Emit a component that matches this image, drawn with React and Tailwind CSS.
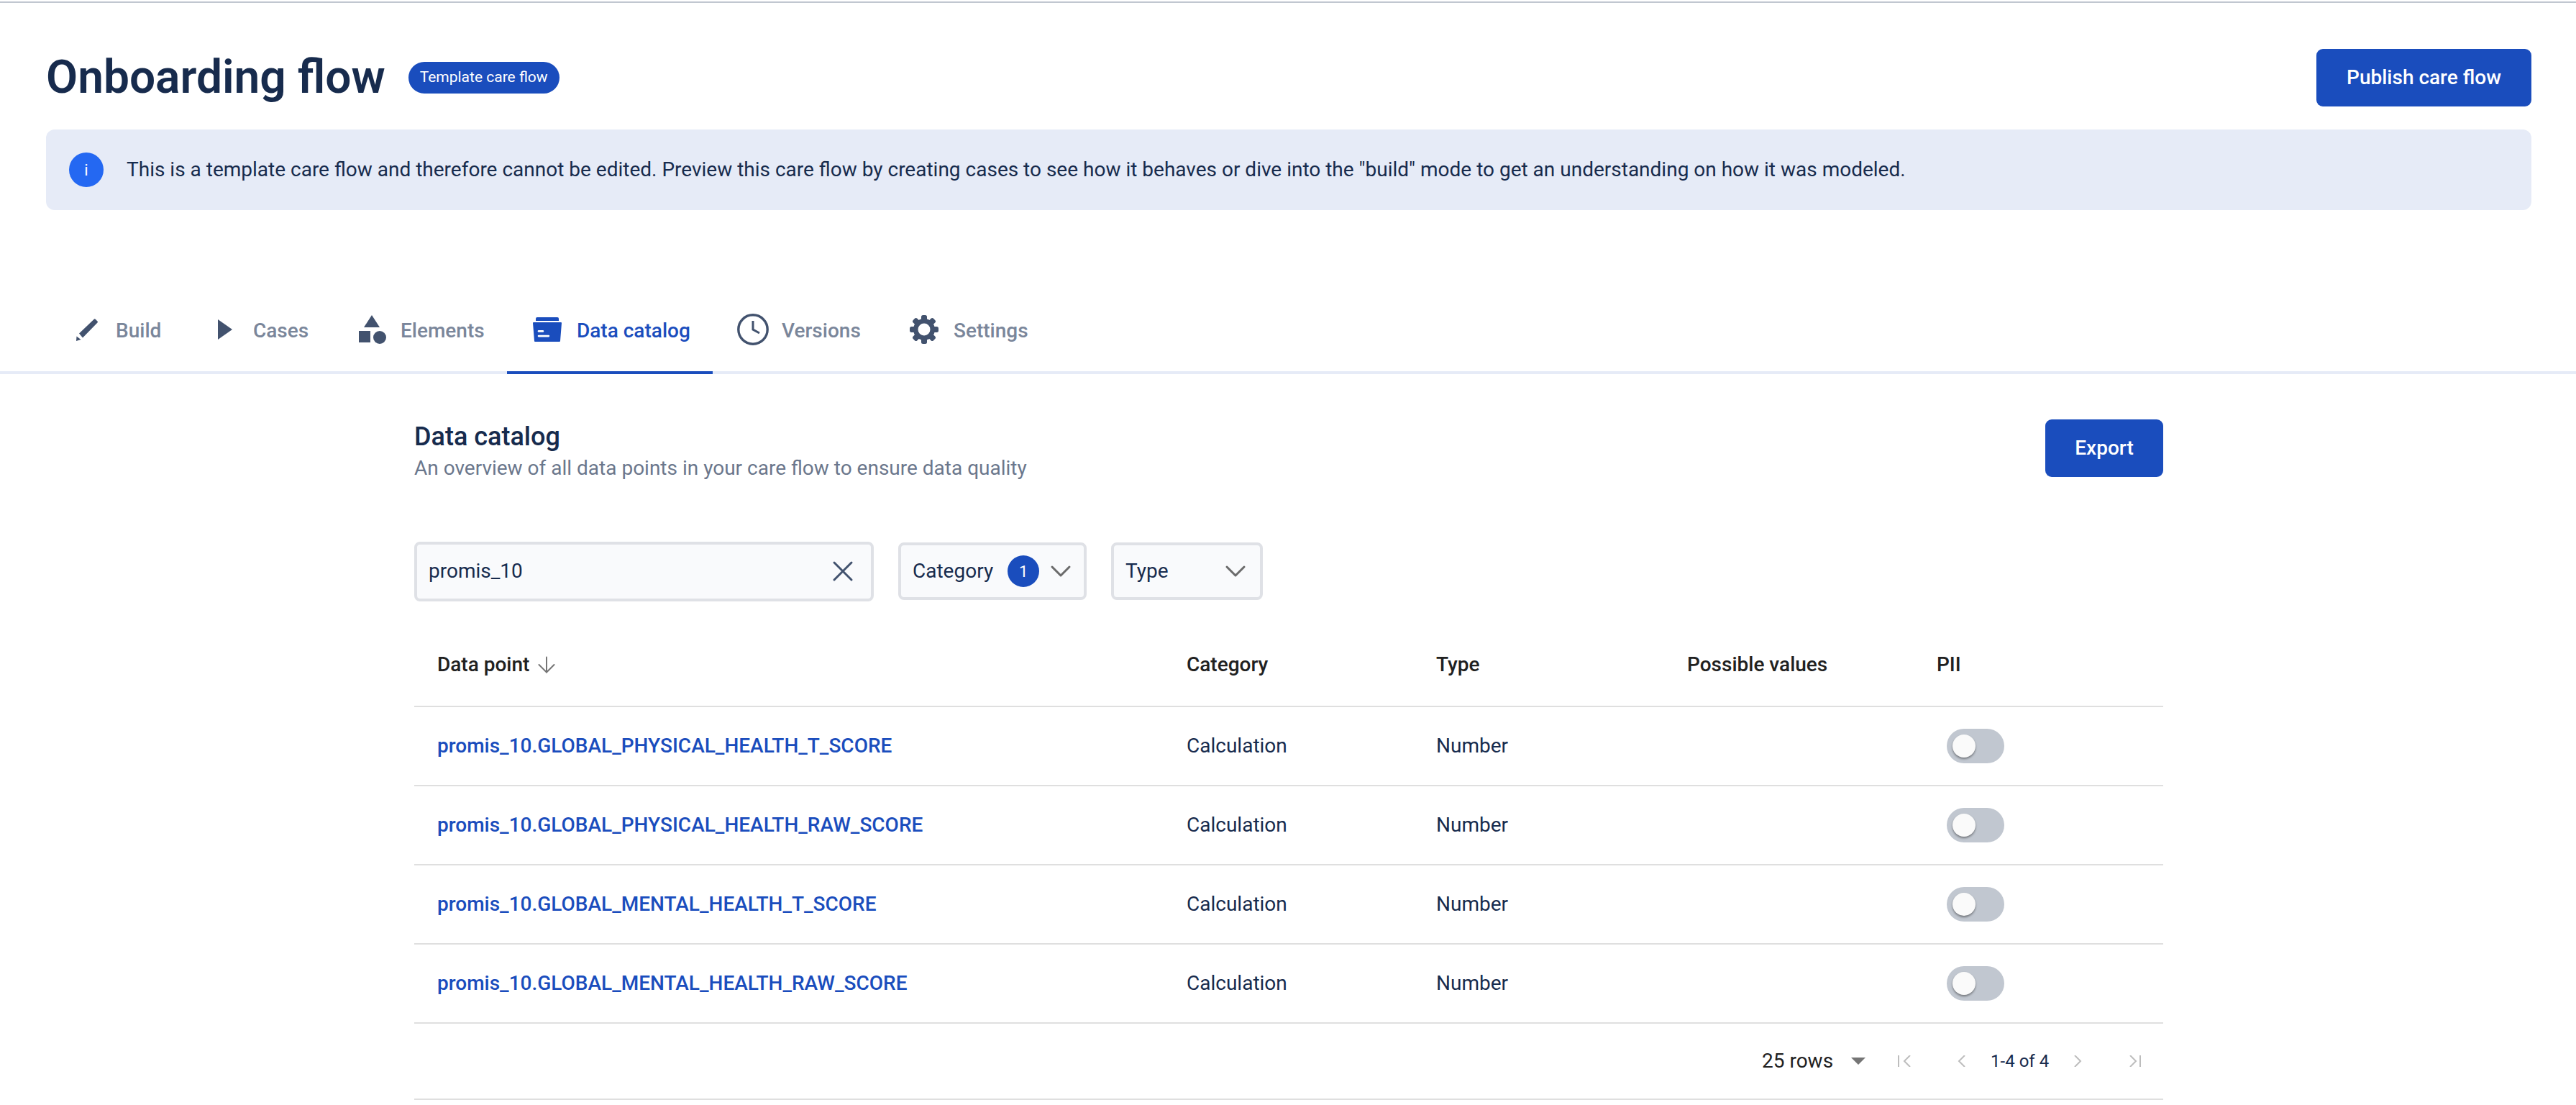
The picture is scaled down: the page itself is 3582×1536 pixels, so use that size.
import { ChevronDown, X, ArrowDown } from "lucide-react";

const rows = [
  "promis_10.GLOBAL_PHYSICAL_HEALTH_T_SCORE",
  "promis_10.GLOBAL_PHYSICAL_HEALTH_RAW_SCORE",
  "promis_10.GLOBAL_MENTAL_HEALTH_T_SCORE",
  "promis_10.GLOBAL_MENTAL_HEALTH_RAW_SCORE",
];

const gridCols = "grid grid-cols-[1042px_347px_349px_347px_347px] items-center";

function PencilIcon() {
  return (
    <svg viewBox="0 0 30 31" className="w-[30px] h-[31px] fill-[#42526e]">
      <path d="M25 0.500Q26 0 27 1L29.500 3.500Q30.300 4.500 29.500 5.500L9 26.500L4 20.500ZM0.500 24.500L6.500 29L0 31Z" />
    </svg>
  );
}

function PlayIcon() {
  return (
    <svg viewBox="0 0 20 28" className="w-5 h-7 fill-[#42526e]">
      <path d="M0 0L20 14L0 28Z" />
    </svg>
  );
}

function ShapesIcon() {
  return (
    <svg viewBox="0 0 38 40" className="w-[38px] h-10 fill-[#42526e]">
      <path d="M18 0L29 17H7ZM0 22H16V38H0Z" />
      <circle cx="29" cy="31" r="9" />
    </svg>
  );
}

function CatalogIcon() {
  return (
    <svg viewBox="0 0 40 34" className="w-10 h-[34px] fill-[#1a4dbd]">
      <path d="M6 0H34Q36 0 36 2V5H4V2Q4 0 6 0Z" />
      <path d="M1 7H39Q40 7 40 8L38 33Q38 34 37 34H3Q2 34 2 33L0 8Q0 7 1 7Z" />
      <rect x="6.700" y="18" width="8.500" height="2.700" rx="1.300" fill="#fff" />
      <rect x="6.700" y="24.700" width="16.500" height="2.700" rx="1.300" fill="#fff" />
    </svg>
  );
}

function ClockIcon() {
  return (
    <svg viewBox="0 0 44 44" className="w-11 h-11 fill-none stroke-[#42526e]">
      <circle cx="22" cy="22" r="20.200" strokeWidth="3.400" />
      <path d="M22 10V22L31 27" strokeWidth="3" />
    </svg>
  );
}

function GearIcon() {
  return (
    <svg viewBox="0 0 40 40" className="w-10 h-10 fill-[#42526e]">
      <rect x="16" y="0" width="8" height="40" rx="2.500" />
      <rect x="16" y="0" width="8" height="40" rx="2.500" transform="rotate(45 20 20)" />
      <rect x="16" y="0" width="8" height="40" rx="2.500" transform="rotate(90 20 20)" />
      <rect x="16" y="0" width="8" height="40" rx="2.500" transform="rotate(135 20 20)" />
      <circle cx="20" cy="20" r="15" />
      <circle cx="20" cy="20" r="8.500" fill="#fff" />
    </svg>
  );
}

function Tab({ icon, label, active, className }) {
  return (
    <div
      className={
        "flex items-center h-[120px] border-b-4 " +
        (active ? "border-[#1a4dbd] text-[#1a4dbd] " : "border-transparent text-[#7a869a] ") +
        className
      }
    >
      {icon}
      <span className="mt-1 font-medium text-[28px]">{label}</span>
    </div>
  );
}

function Toggle() {
  return (
    <div className="ml-[46px] w-20 h-12 rounded-full bg-[#c1c7d0] flex items-center pl-2">
      <div className="w-8 h-8 rounded-full bg-[#fafafa] shadow-[0_2px_3px_rgba(0,0,0,0.4)]" />
    </div>
  );
}

function PagerIcon({ width, d, className }) {
  return (
    <svg
      viewBox={`0 0 ${width} 16`}
      width={width}
      height="16"
      className={"fill-none stroke-[#bdbdbd] stroke-2 " + className}
    >
      <path d={d} />
    </svg>
  );
}

export default function App() {
  return (
    <div className="h-[1536px] overflow-hidden bg-white font-['Roboto',sans-serif] text-[#172b4d]">
      <div className="mt-0.5 h-0.5 bg-[#c1c7d0]" />

      <div className="pl-16 pr-[62px] pt-16 flex justify-between items-start">
        <div className="flex items-center h-20 gap-8">
          <h1 className="font-semibold text-[64px] leading-none">Onboarding flow</h1>
          <span className="h-11 px-4 rounded-full bg-[#1a4dbd] text-white text-[21px] flex items-center">
            Template care flow
          </span>
        </div>
        <button className="w-[299px] h-20 rounded-[9px] bg-[#1a4dbd] text-white text-[28px] font-medium">
          Publish care flow
        </button>
      </div>

      <div className="ml-16 mr-[62px] mt-8 h-28 rounded-xl bg-[#e6ebf7] flex items-center px-8">
        <div className="w-12 h-12 rounded-full bg-[#2468f2] text-white text-[22px] flex items-center justify-center">
          i
        </div>
        <p className="ml-8 text-[28px]">
          This is a template care flow and therefore cannot be edited. Preview this care flow by creating cases to see how
          it behaves or dive into the "build" mode to get an understanding on how it was modeled.
        </p>
      </div>

      <div className="mt-[108px] h-[120px] border-b-4 border-[#e6ebf7] flex items-start pl-[106px]">
        <Tab icon={<PencilIcon />} label="Build" className="gap-[25px] w-[197px]" />
        <Tab icon={<PlayIcon />} label="Cases" className="gap-[29px] w-[196px]" />
        <Tab icon={<ShapesIcon />} label="Elements" className="gap-5 w-[206px]" />
        <Tab icon={<CatalogIcon />} label="Data catalog" active className="gap-[21px] w-[286px] pl-9" />
        <Tab icon={<ClockIcon />} label="Versions" className="gap-[18px] w-[274px] pl-[34px]" />
        <Tab icon={<GearIcon />} label="Settings" className="gap-[21px]" />
      </div>

      <div className="ml-[576px] w-[2432px]">
        <div className="pt-[63px] flex justify-between items-start h-[232px]">
          <div>
            <h2 className="font-medium text-[36px] leading-[48px]">Data catalog</h2>
            <p className="mt-1 text-[28px] text-[#6b778c] leading-8">
              An overview of all data points in your care flow to ensure data quality
            </p>
          </div>
          <button className="w-[164px] h-20 rounded-[9px] bg-[#1a4dbd] text-white text-[28px] font-medium">Export</button>
        </div>

        <div className="flex items-center gap-[34px] h-[84px]">
          <div className="w-[639px] h-[83px] rounded-lg border-4 border-[#dfe1e6] bg-[#f9fafc] flex items-center justify-between pl-4 pr-[15px]">
            <span className="text-[28px]">promis_10</span>
            <X className="w-12 h-12 text-[#42526e]" strokeWidth={1.5} />
          </div>
          <div className="w-[262px] h-20 rounded-lg border-4 border-[#dfe1e6] bg-[#f9fafc] flex items-center pl-4">
            <span className="text-[28px]">Category</span>
            <span className="ml-5 w-11 h-11 rounded-full bg-[#1a4dbd] text-white text-[22px] flex items-center justify-center">
              1
            </span>
            <ChevronDown className="ml-1.5 w-12 h-12 text-[#6b6b6b]" strokeWidth={1.5} />
          </div>
          <div className="w-[211px] h-20 rounded-lg border-4 border-[#dfe1e6] bg-[#f9fafc] flex items-center justify-between pl-4 pr-2.5">
            <span className="text-[28px]">Type</span>
            <ChevronDown className="w-12 h-12 text-[#6b6b6b]" strokeWidth={1.5} />
          </div>
        </div>

        <div className={gridCols + " h-[147px] pt-[30px] border-b-2 border-[#dfdfdf] text-[28px] font-medium text-[#212121]"}>
          <div className="pl-8 flex items-center gap-1.5">
            Data point
            <ArrowDown className="w-9 h-9 text-[#757575]" strokeWidth={1.33} />
          </div>
          <div className="pl-8">Category</div>
          <div className="pl-8">Type</div>
          <div className="pl-8">Possible values</div>
          <div className="pl-8">PII</div>
        </div>

        {rows.map((name) => (
          <div key={name} className={gridCols + " h-[110px] border-b-2 border-[#dfdfdf] text-[28px]"}>
            <div className="pl-8 font-medium text-[#1a4dbd]">{name}</div>
            <div className="pl-8">Calculation</div>
            <div className="pl-8">Number</div>
            <div />
            <Toggle />
          </div>
        ))}

        <div className="h-[106px] border-b-2 border-[#dfdfdf] flex items-center">
          <span className="ml-[1874px] text-[28px] text-[#212121]">25 rows</span>
          <span className="ml-[25px] border-x-10 border-x-transparent border-t-10 border-t-[#757575]" />
          <PagerIcon width={18} d="M1 0V16M17 0L9 8L17 16" className="ml-[45px]" />
          <PagerIcon width={11} d="M10 0L2 8L10 16" className="ml-[65px]" />
          <span className="ml-[35px] text-[24px]">1-4 of 4</span>
          <PagerIcon width={11} d="M1 0L9 8L1 16" className="ml-[35px]" />
          <PagerIcon width={16} d="M1 0L9 8L1 16M15 0V16" className="ml-[66px]" />
        </div>
      </div>
    </div>
  );
}
